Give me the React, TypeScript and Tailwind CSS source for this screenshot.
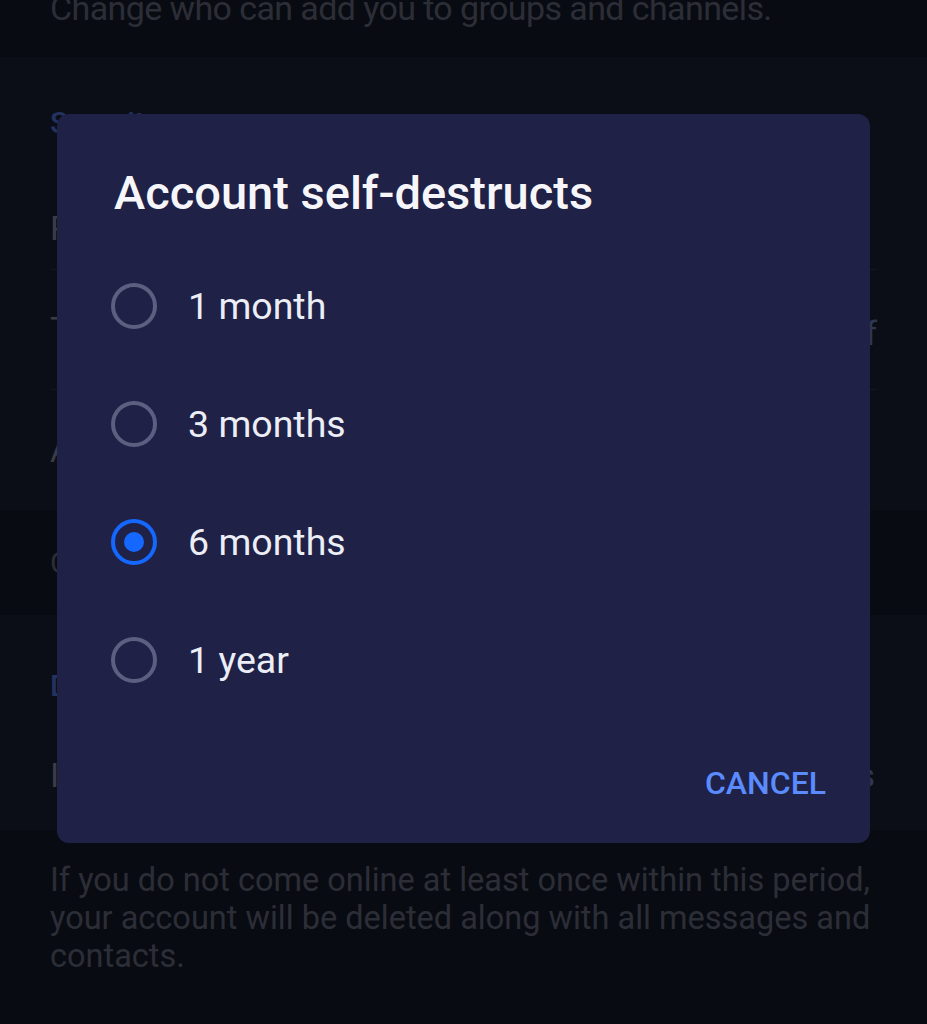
import React from "react";

const font = { fontFamily: "Roboto, 'Noto Sans', sans-serif" };

function Radio({ checked }: { checked?: boolean }) {
  return checked ? (
    <div className="w-[46px] h-[46px] rounded-full border-[4px] border-[#1468ff] flex items-center justify-center">
      <div className="w-[20px] h-[20px] rounded-full bg-[#1468ff]" />
    </div>
  ) : (
    <div className="w-[46px] h-[46px] rounded-full border-[4px] border-[#5d5f80]" />
  );
}

export default function App() {
  const options = [
    { label: "1 month", checked: false },
    { label: "3 months", checked: false },
    { label: "6 months", checked: true },
    { label: "1 year", checked: false },
  ];
  return (
    <div className="relative w-[927px] h-[1024px] overflow-hidden bg-[#090b12]" style={font}>
      {/* Background settings page (dimmed) */}
      <div className="flex flex-col">
        <div className="h-[57px] px-[50px] relative overflow-hidden">
          <div className="absolute left-[50px] top-[-16px] text-[34px] leading-[48px] tracking-[-0.6px] text-[#2c2e37] whitespace-nowrap">
            Change who can add you to groups and channels.
          </div>
        </div>
        <div className="h-[453px] bg-[#0c0e17] flex flex-col">
          <div className="h-[130px] px-[50px] flex items-center text-[30px] font-medium text-[#243260]">
            Security
          </div>
          <div className="h-[83px] mx-[50px] flex items-center text-[34px] text-[#3a3c46] border-b border-[#15171f]">
            Passcode Lock
          </div>
          <div className="h-[120px] mx-[50px] flex items-center justify-between text-[34px] text-[#3a3c46] border-b border-[#15171f]">
            <span>Two-Step Verification</span>
            <span className="text-[#2e3752] mr-[0px] mt-[8px]">Off</span>
          </div>
          <div className="h-[120px] mx-[50px] flex items-center text-[34px] text-[#3a3c46]">
            Active Sessions
          </div>
        </div>
        <div className="h-[105px] px-[50px] flex items-center text-[30px] text-[#2c2e37]">
          Control your sessions on other devices.
        </div>
        <div className="h-[215px] bg-[#0c0e17] flex flex-col">
          <div className="h-[135px] px-[50px] flex items-center pt-[6px] text-[30px] font-medium text-[#243260]">
            Delete my account
          </div>
          <div className="h-[80px] mx-[50px] flex items-start justify-between text-[34px] text-[#3a3c46]">
            <span>If away for</span>
            <span className="text-[#2e3752] mr-[2px]">6 months</span>
          </div>
        </div>
        <div className="px-[50px] pt-[31px] text-[32.5px] leading-[38px] text-[#2c2e37]">
          If you do not come online at least once within this period, your account will be deleted along with all messages and contacts.
        </div>
      </div>

      {/* Dialog */}
      <div className="absolute left-[57px] top-[114px] w-[813px] h-[729px] rounded-[12px] bg-[#1f2146] flex flex-col">
        <div className="pl-[57px] pt-[52px] h-[133px] text-[47px] leading-[54px] font-medium text-[#f6f6fa]">
          Account self-destructs
        </div>
        <div className="flex flex-col">
          {options.map((o) => (
            <div key={o.label} className="h-[118px] flex items-center pl-[54px]">
              <Radio checked={o.checked} />
              <span className="ml-[31px] text-[37.5px] leading-[44px] text-[#eceef6]">{o.label}</span>
            </div>
          ))}
        </div>
        <div className="flex justify-end pr-[44px] mt-[46px]">
          <span className="text-[32px] font-medium leading-[36px] text-[#5a8cff]">CANCEL</span>
        </div>
      </div>
    </div>
  );
}
